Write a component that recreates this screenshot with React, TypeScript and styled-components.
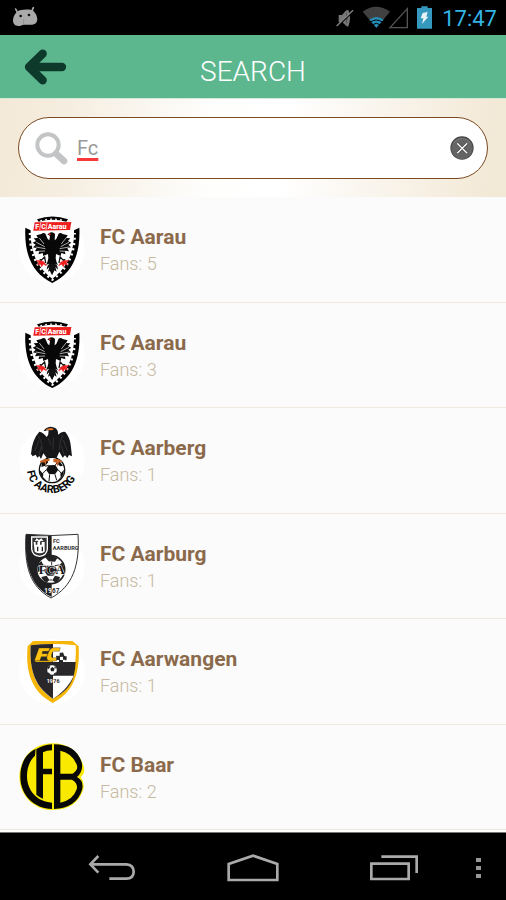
import React, { useState } from "react";
import styled, { createGlobalStyle } from "styled-components";

const GlobalStyle = createGlobalStyle`
  *, *::before, *::after { box-sizing: border-box; }
  body {
    margin: 0;
    background: #000;
    font-family: Roboto, "Liberation Sans", sans-serif;
  }
  button { margin: 0; padding: 0; border: 0; background: none; cursor: pointer; display: flex; }
  svg { display: block; flex: none; }
`;

const Screen = styled.div`
  display: flex;
  flex-direction: column;
  min-height: 100vh;
`;

const StatusBar = styled.div`
  display: flex;
  align-items: center;
  justify-content: space-between;
  height: 35px;
  padding: 0 9px 0 12px;
  background: #000;
`;

const StatusIcons = styled.div`
  display: flex;
  align-items: center;
`;

const IconGroup = styled.div`
  display: flex;
  align-items: center;
  gap: 8px;
`;

const Clock = styled.time`
  margin-left: 10px;
  padding-top: 2px;
  font-size: 22px;
  line-height: 33px;
  color: #33b5e5;
`;

const Header = styled.header`
  display: grid;
  grid-template-columns: 1fr auto 1fr;
  align-items: center;
  height: 63px;
  padding: 0 24px;
  background: #5cb78f;
`;

const Title = styled.h1`
  margin: 0;
  padding-top: 10px;
  font-size: 28px;
  line-height: 35px;
  font-weight: 300;
  color: #fff;
`;

const SearchArea = styled.div`
  padding: 18px;
  background: linear-gradient(95deg, #f3e9d7 0%, #f5eddf 12%, #fefefd 42%, #fff 56%, #faf6ef 72%, #f3e9d7 96%);
  border-top: 1px solid #d5e8d8;
`;

const SearchBox = styled.label`
  display: flex;
  align-items: center;
  height: 62px;
  padding: 0 13px 0 16px;
  border: 1px solid #7b4b22;
  border-radius: 31px;
  background: #fff;
`;

const SearchInput = styled.input`
  flex: 1;
  min-width: 0;
  height: 40px;
  margin-left: 9px;
  padding: 0;
  border: 0;
  outline: 0;
  background: transparent;
  font: 400 20px/40px Roboto, "Liberation Sans", sans-serif;
  color: #999;
  text-decoration: underline 3px #f73838;
  text-underline-offset: 3px;
`;

const List = styled.ul`
  flex: 1;
  margin: 0;
  padding: 0;
  list-style: none;
  background: #fff;
`;

const Row = styled.li`
  display: flex;
  align-items: center;
  gap: 15px;
  height: 105px;
  padding: 0 19px;
  border-bottom: 1px solid #f0e9df;
  background: #fbfbfb;
  &:nth-child(odd) { height: 106px; }
`;

const Crest = styled.svg`
  width: 66px;
  height: 66px;
  border-radius: 50%;
  background: #fff;
  overflow: visible;
`;

const Club = styled.div`
  display: flex;
  flex-direction: column;
  padding-top: 2px;
`;

const ClubName = styled.span`
  font-size: 21px;
  line-height: 27px;
  font-weight: 700;
  color: #8b6a4c;
`;

const Fans = styled.span`
  font-size: 18px;
  line-height: 26px;
  font-weight: 300;
  color: #c6b99f;
`;

const NavBar = styled.nav`
  display: grid;
  grid-template-columns: 42px 1fr 1fr 1fr 42px;
  align-items: center;
  justify-items: center;
  height: 68px;
  padding-top: 2px;
  border-top: 1px solid #777;
  background: #000;
`;

const MenuButton = styled.button`
  && {
    justify-self: end;
    padding-right: 24px;
  }
`;

const DroidIcon = () => (
  <svg width="26" height="22" viewBox="0 4 78 66" fill="#aaa" aria-hidden="true">
    <path d="M11 10l6 12M64 6l-5 12" stroke="#aaa" strokeWidth="5" strokeLinecap="round" />
    <path d="M15 18C23 11 55 9 64 16c12 10 17 31 5 38-7 4-17 4-33 3-7 0-9 4-17 4C4 61 0 47 5 33c3-7 6-11 10-15z" />
    <circle cx="26" cy="31" r="4" fill="#111" /><circle cx="51" cy="28" r="4" fill="#111" />
    <path d="M35 40v15" stroke="#888" strokeWidth="2" />
  </svg>
);

const MuteIcon = () => (
  <svg width="18" height="22" viewBox="0 0 54 66" aria-hidden="true">
    <path d="M8 24h10L32 8v50L18 45H8z" fill="#777" />
    <path d="M33 10q10 22 0 48" fill="none" stroke="#777" strokeWidth="8" />
    <path d="M2 61L50 13" stroke="#000" strokeWidth="5" />
    <path d="M2 57L51 10" stroke="#858585" strokeWidth="4" />
  </svg>
);

const SignalIcons = () => (
  <svg width="47" height="23" viewBox="0 0 141 69" aria-hidden="true">
    <path d="M2 17Q42-13 84 17L43 65z" fill="#404040" />
    <path d="M22 41Q43 25 65 41L43 65z" fill="#258db8" />
    <path d="M25 48q18-12 36 0M32 56q11-8 22 0" fill="none" stroke="#000" strokeWidth="3" />
    <path d="M84 65L136 8v57z" fill="none" stroke="#555" strokeWidth="4" />
  </svg>
);

const BatteryIcon = () => (
  <svg width="15" height="23" viewBox="0 0 45 69" aria-hidden="true">
    <path d="M13 1h19v5h13v62H0V6h13z" fill="#3498bf" />
    <path d="M17 21l15-3-4 14h6L15 54l4-17h-8z" fill="#e8f4f8" />
  </svg>
);

const BackArrow = () => (
  <svg width="43" height="36" viewBox="0 0 129 108" aria-hidden="true">
    <path d="M56 14L15 54l41 40M18 54h96" fill="none" stroke="#0d3a2a" strokeWidth="25" strokeLinecap="round" strokeLinejoin="round" />
  </svg>
);

const Magnifier = () => (
  <svg width="33" height="33" viewBox="0 0 99 99" aria-hidden="true">
    <circle cx="39" cy="39" r="32" fill="none" stroke="#c2c4c5" strokeWidth="12" />
    <path d="M63 65l24 22" stroke="#c2c4c5" strokeWidth="20" strokeLinecap="round" />
  </svg>
);

const ClearIcon = () => (
  <svg width="24" height="24" viewBox="0 0 72 72" aria-hidden="true">
    <circle cx="36" cy="36" r="35" fill="#484848" />
    <circle cx="36" cy="37" r="32" fill="#646464" />
    <path d="M10 22Q36-8 62 22" fill="none" stroke="#858585" strokeWidth="2" />
    <path d="M23 23l27 27M50 23L23 50" stroke="#444" strokeWidth="8" />
    <path d="M23 23l27 27M50 23L23 50" stroke="#fff" strokeWidth="4" strokeLinecap="round" />
  </svg>
);

const sans = 'Roboto, "Liberation Sans", sans-serif';

const AarauCrest = () => (
  <Crest viewBox="27 36 198 198" aria-hidden="true">
    <path d="M46 68l16 8c-2 66 21 113 65 145 44-32 67-79 65-145l16-8c4 82-22 138-81 166C68 206 42 150 46 68z" fill="#000" />
    <path d="M60 84c-2 62 23 110 67 140 44-30 69-78 67-140" fill="none" stroke="#fff" strokeWidth="7" strokeDasharray="6 10" />
    <path d="M81 43q46-17 93 0l-5 7q-42-12-83 0z" fill="#000" />
    <path d="M91 47q36-9 74 0" fill="none" stroke="#fff" strokeWidth="4" strokeDasharray="5 10" />
    <path d="M74 52l110-1-4 24-110 2z" fill="#ee2020" />
    <path d="M92 53l-3 22M111 53l-3 22" stroke="#fff" strokeWidth="2" />
    <g fill="#fff" fontFamily={sans} fontWeight="900" fontSize="21">
      <text x="76" y="71">F</text><text x="94" y="71">C</text><text x="113" y="71">Aarau</text>
    </g>
    <path d="M115 86q12-9 20 1l-1 19q6-3 10-15c1-8 9-9 14-4l15 4-5 8 13 1-7 8 10 5-9 6 8 8-11 3 5 9-12-1 1 10-12-4-2 9-14-6-1 13q2 13 7 20l-9-4-3 23-6 11-6-11-3-23-9 4q5-7 7-20l-1-13-14 6-2-9-12 4 1-10-12 1 5-9-11-3 8-8-9-6 10-5-7-8 13-1-5-8 15-4c5-5 13-4 14 4q4 12 10 15l2-13-8-5z" fill="#080808" />
    <path d="M88 99l14 18M79 112l25 13M77 126l29 5M83 139l22-1M168 99l-14 18M177 112l-25 13M178 126l-29 5M171 139l-22-1" stroke="#fff" strokeWidth="2" />
    <path d="M105 154q-10 11-15 16l-5 10M96 165l-7-1M104 157l3 17M149 154q10 11 15 16l5 10M158 165l8-1M150 157l-3 17" fill="none" stroke="#111" strokeWidth="4" />
    <path d="M92 167l10 4 7 11-9-5-5 8-3-8-9 2 4-8-8-4zM163 167l-10 4-7 11 9-5 5 8 3-8 9 2-4-8 8-4z" fill="#f01e1e" stroke="#f01e1e" strokeWidth="2" />
    <circle cx="119" cy="88" r="3" fill="#d22" />
    <path d="M127 176q-15-4-17 18l8-8-4 14 9-5 4 15 4-15 9 5-4-14 8 8q-2-22-17-18z" fill="#111" />
  </Crest>
);

const AarbergCrest = () => (
  <Crest viewBox="27 39 198 198" aria-hidden="true">
    <path d="M108 40q14-9 29 0 8 6 7 19 12-11 22-8 14 18 16 38l4 35-9-4-5 9-7-8-7 7-10-18-8 18-13 9-16-7-11-15-7 17-5-9-6 5-5-9-9 5-5-7q3-44 25-67 12 2 22 16 8-9 4-19l-14 1z" fill="#171719" />
    <path d="M108 42l18-3 5 6-17 1z" fill="#ed7a28" /><path d="M108 45l9 4" stroke="#fff" strokeWidth="2" />
    <path d="M83 61q13 15 14 46M159 61q-10 15-11 44M87 76l-12 31M160 75l12 33M94 94l-7 26M154 92l8 26M115 71l8 20M130 68l-1 35" fill="none" stroke="#66666a" strokeWidth="1" />
    <circle cx="126" cy="165" r="38" fill="#fff" stroke="#111" strokeWidth="4" />
    <path d="M116 151l20-1 9 14-10 14-18-1-9-13zM96 139l12-8 7 10-9 11-12 4zM143 132l16 20-9 2-12-12zM89 165l11 12-1 9 14 15q-23-12-24-36zM162 164l-11 12 1 11-14 15q23-12 24-38z" fill="#111" />
    <path d="M106 154l10-3M108 165l-10 11M119 178l-2 20M135 178l5 18M144 164l9 10M136 150l7-9" stroke="#111" strokeWidth="3" />
    <path d="M90 138l15-6 14 0-1 6-9 1-2 13-4-10-12 1zM130 132h15l14 9-12 1-4 13-4-12-9-2z" fill="#c86322" />
    <path id="aarberg-arc" d="M52 168a74 68 0 0 0 149-5" fill="none" />
    <text fill="#080808" fontFamily={sans} fontSize="33" fontWeight="700"><textPath href="#aarberg-arc">FC AARBERG</textPath></text>
  </Crest>
);

const AarburgCrest = () => (
  <Crest viewBox="27 39 198 198" aria-hidden="true">
    <path d="M48 43Q127 50 204 43c6 94-17 157-81 191C59 200 42 137 48 43z" fill="#fff" stroke="#333" strokeWidth="3" />
    <path d="M48 43q40 5 77 4v184C63 201 43 139 48 43z" fill="#202022" />
    <path d="M65 51h47v36q-2 20-23 22-22-2-24-22z" fill="#333" stroke="#fff" strokeWidth="4" />
    <path d="M71 66h6v8h5v-8h8v8h5v-8h9v29q-15 9-30 0zM80 55l7 5 7-5 7 9-8-2-5 6-6-6-8 2z" fill="#fff" />
    <path d="M83 80v14M97 80v14" stroke="#222" strokeWidth="4" />
    <g fill="#333" fontFamily={sans} fontSize="17" fontWeight="700"><text x="129" y="69">FC</text><text x="128" y="91">AARBURG</text></g>
    <circle cx="122" cy="149" r="42" fill="#fff" stroke="#202020" strokeWidth="5" />
    <path d="M104 110l20-4 18 8-7 11-19-1zM84 133l10-10 6 12-8 17-9 5zM158 126l7 27-11-3-7-14zM94 171l16-4 8 13-8 8q-13-6-16-17zM150 171l-15-4-8 14 10 7q12-7 13-17zM109 137h26l7 15-12 15h-17l-11-14z" fill="#242424" />
    <path d="M100 135l9 3M135 137l12-2M118 180h9M92 152l11 1M142 152l12-2M125 125v12" stroke="#333" strokeWidth="3" />
    <text x="86" y="163" fill="#111" stroke="#fff" strokeWidth="3" paintOrder="stroke" fontFamily='"Liberation Serif", serif' fontSize="38" fontWeight="700">FCA</text>
    <text x="103" y="218" fill="#fff" fontFamily={sans} fontSize="19" fontWeight="700">19</text>
    <text x="126" y="218" fill="#222" fontFamily={sans} fontSize="19" fontWeight="700">67</text>
  </Crest>
);

const AarwangenCrest = () => (
  <Crest viewBox="27 39 198 198" aria-hidden="true">
    <path d="M69 45h118l19 16c4 82-15 138-78 170-60-31-83-89-75-170z" fill="#f5b608" />
    <path d="M62 58q67-8 135 0c4 76-15 126-69 160-52-33-70-83-66-160z" fill="#fff" />
    <path d="M62 58q31-4 67-4v93h63q-12 46-63 71c-53-34-71-84-67-160z" fill="#29272a" />
    <path d="M129 147v71c38-23 55-52 63-71z" fill="#fff" /><path d="M129 108h68q-1 24-6 41h-62z" fill="#29272a" />
    <path d="M87 66h33l-4 10H98l-2 7h18l-3 9H94l-5 12H73zM119 72q4-8 15-7h17l-3 11h-16q-5 0-7 10-2 9 3 9h14l-3 10h-18q-13 0-10-16z" fill="#ffc20d" stroke="#29272a" strokeWidth="1" />
    <path d="M76 106h52" stroke="#ffc20d" strokeWidth="3" />
    <path d="M149 80h11v10h-11zM159 91h11v10h-11zM139 91h11v11h-11zM147 102h12v8h-12z" fill="#29272a" />
    <path d="M157 80l10 23M138 91h27" stroke="#222" strokeWidth="3" />
    <circle cx="126" cy="132" r="15" fill="#fff" stroke="#111" />
    <path d="M121 128l6-5 7 5-3 8h-8zM113 123l8-4-2 6-6 6zM134 121l6 7-7-2zM116 139l6 7-8-3zM132 142l7-3-6 7z" fill="#222" />
    <text x="110" y="170" fill="#fff" fontFamily={sans} fontSize="16" fontWeight="700">19</text>
    <text x="130" y="170" fill="#222" fontFamily={sans} fontSize="16" fontWeight="700">76</text>
  </Crest>
);

const BaarCrest = () => (
  <Crest viewBox="27 42 198 198" aria-hidden="true">
    <path d="M126 40C71 40 28 85 28 140s43 100 99 100q74 0 93-62 5-21-8-37 17-12 7-38-23-63-93-63z" fill="#f9e900" />
    <path d="M77 57C44 72 31 105 31 140c0 56 42 95 95 97v-19c-46-3-75-37-75-80 0-25 8-46 24-61z" fill="#070707" />
    <path d="M79 57q21-12 47-14v18q-16 0-27 6v49h27v17H99v73q-9-3-20-12z" fill="#070707" />
    <path d="M132 43q66 0 83 54 6 26-14 44 22 12 15 39-17 54-84 57zM151 62v69h37q20-14 11-30-14-32-48-39zm0 87v69q38-7 49-40 5-18-14-29z" fill="#070707" fillRule="evenodd" />
    <path d="M129 42v197" stroke="#f9e900" strokeWidth="5" />
  </Crest>
);

const clubs = [
  { name: "FC Aarau", fans: 5, crest: AarauCrest },
  { name: "FC Aarau", fans: 3, crest: AarauCrest },
  { name: "FC Aarberg", fans: 1, crest: AarbergCrest },
  { name: "FC Aarburg", fans: 1, crest: AarburgCrest },
  { name: "FC Aarwangen", fans: 1, crest: AarwangenCrest },
  { name: "FC Baar", fans: 2, crest: BaarCrest },
];

export default function App() {
  const [query, setQuery] = useState("Fc");
  return (
    <Screen>
      <GlobalStyle />
      <StatusBar>
        <DroidIcon />
        <StatusIcons>
          <IconGroup>
            <MuteIcon />
            <SignalIcons />
            <BatteryIcon />
          </IconGroup>
          <Clock>17:47</Clock>
        </StatusIcons>
      </StatusBar>
      <Header>
        <button type="button" aria-label="Back"><BackArrow /></button>
        <Title>SEARCH</Title>
      </Header>
      <SearchArea>
        <SearchBox>
          <Magnifier />
          <SearchInput type="text" aria-label="Search clubs" spellCheck={false} value={query} onChange={(e) => setQuery(e.target.value)} />
          <button type="button" aria-label="Clear search" onClick={() => setQuery("")}><ClearIcon /></button>
        </SearchBox>
      </SearchArea>
      <List>
        {clubs.map(({ name, fans, crest: Logo }, i) => (
          <Row key={i}>
            <Logo />
            <Club>
              <ClubName>{name}</ClubName>
              <Fans>Fans: {fans}</Fans>
            </Club>
          </Row>
        ))}
      </List>
      <NavBar>
        <span />
        <button type="button" aria-label="System back">
          <svg width="48" height="28" viewBox="0 0 144 84" fill="none" stroke="#aaa" strokeWidth="8">
            <path d="M31 6L7 31l24 25M8 31h107q22 2 22 22t-22 21H64" />
          </svg>
        </button>
        <button type="button" aria-label="Home">
          <svg width="52" height="28" viewBox="0 0 156 84" fill="none" stroke="#aaa" strokeWidth="8">
            <path d="M5 78V30L78 5l73 25v48z" />
          </svg>
        </button>
        <button type="button" aria-label="Recent apps">
          <svg width="48" height="26" viewBox="0 0 144 78" fill="none" stroke="#aaa" strokeWidth="8">
            <path d="M4 26h112v46H4zM34 5h106v49" />
          </svg>
        </button>
        <MenuButton type="button" aria-label="Menu">
          <svg width="6" height="22" viewBox="0 0 6 22" fill="#999">
            <path d="M0 1h5v4H0zM0 9h5v4H0zM0 17h5v4H0z" />
          </svg>
        </MenuButton>
      </NavBar>
    </Screen>
  );
}
